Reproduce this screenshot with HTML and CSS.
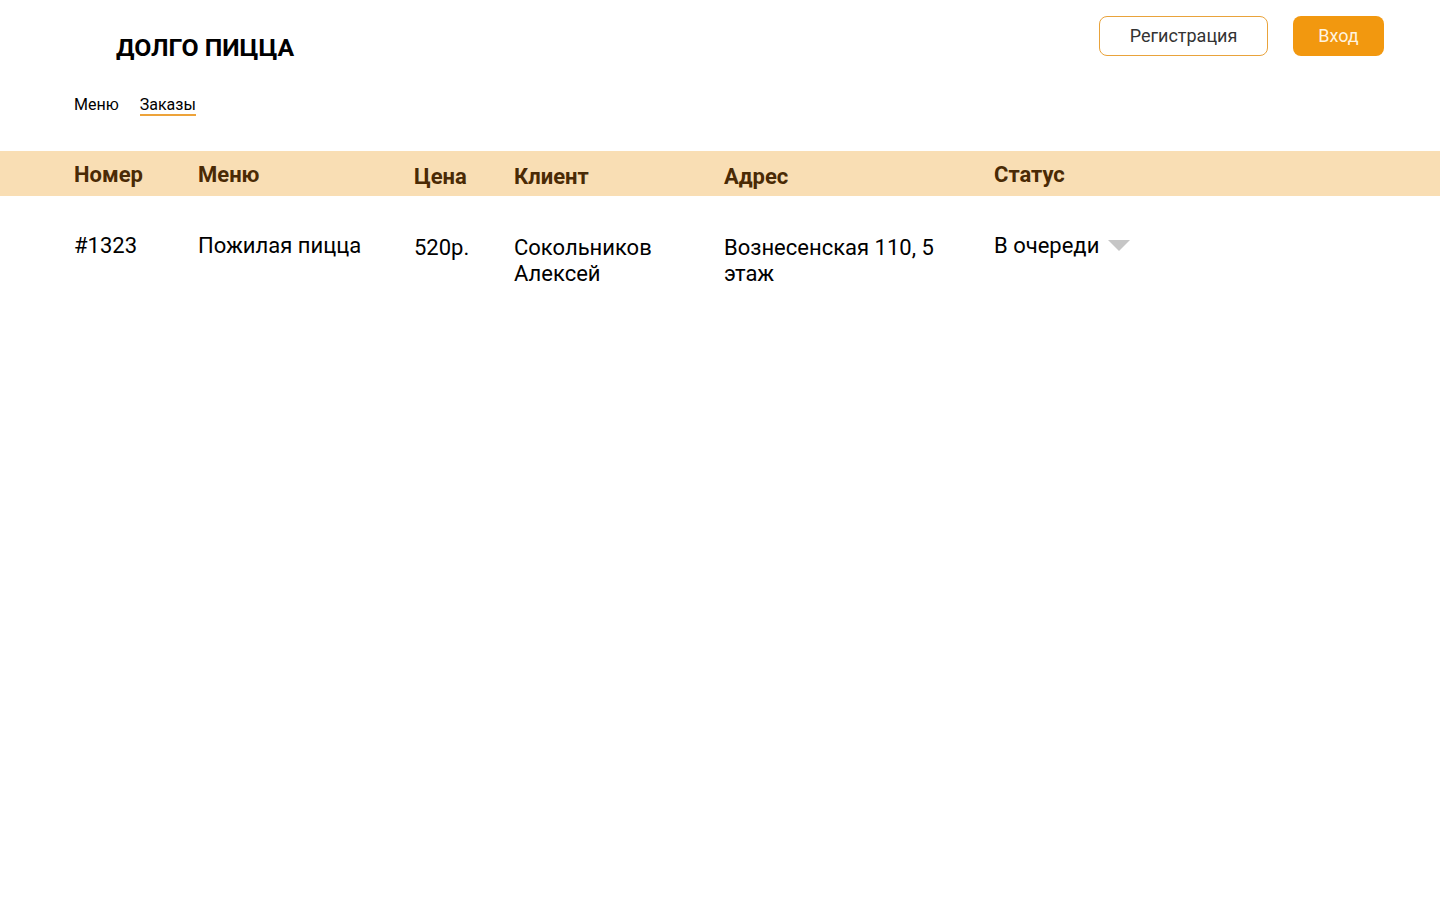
FILE: index.html
```html
<!DOCTYPE html>
<html lang="ru">
<head>
<meta charset="utf-8">
<title>Долго пицца — Заказы</title>
<link rel="stylesheet" href="styles.css">
</head>
<body>
<header class="topbar">
  <div class="brand">ДОЛГО ПИЦЦА</div>
  <div class="auth">
    <button class="btn btn-outline">Регистрация</button>
    <button class="btn btn-fill">Вход</button>
  </div>
</header>
<nav class="nav">
  <a class="nav-link" href="#">Меню</a>
  <a class="nav-link active" href="#">Заказы</a>
</nav>
<section class="orders">
  <div class="row head">
    <div class="cell c-num">Номер</div>
    <div class="cell c-menu">Меню</div>
    <div class="cell c-price low">Цена</div>
    <div class="cell c-client low">Клиент</div>
    <div class="cell c-addr low">Адрес</div>
    <div class="cell c-status">Статус</div>
  </div>
  <div class="row body">
    <div class="cell c-num">#1323</div>
    <div class="cell c-menu">Пожилая пицца</div>
    <div class="cell c-price low">520р.</div>
    <div class="cell c-client low">Сокольников<br>Алексей</div>
    <div class="cell c-addr low">Вознесенская 110, 5<br>этаж</div>
    <div class="cell c-status">
      <div class="select">В очереди <span class="caret"></span></div>
    </div>
  </div>
</section>
</body>
</html>
```
FILE: styles.css
```css
* { box-sizing: border-box; }
html, body { margin: 0; background: #fff; }
body {
  font-family: Roboto, "Noto Sans", "DejaVu Sans", sans-serif;
  color: #000;
}
.topbar {
  display: flex;
  justify-content: space-between;
  align-items: flex-start;
  padding: 16px 56px 0 116px;
  height: 84px;
}
.brand {
  margin-top: 17px;
  font-size: 24.8px;
  font-weight: 700;
  line-height: 29px;
}
.auth {
  display: flex;
  gap: 25px;
}
.btn {
  height: 40px;
  border-radius: 8px;
  font-family: inherit;
  font-size: 18px;
  padding: 0 0 2px;
  cursor: pointer;
}
.btn-outline {
  width: 169px;
  background: #fff;
  border: 1px solid #E9A33B;
  color: #333;
}
.btn-fill {
  width: 91px;
  background: #F2980F;
  border: none;
  color: #FFF3DF;
}
.nav {
  display: flex;
  gap: 21px;
  padding-left: 74px;
  height: 67px;
}
.nav-link {
  font-size: 16px;
  line-height: 18px;
  color: #000;
  text-decoration: none;
  height: 32px;
  padding-top: 12px;
}
.nav-link.active {
  border-bottom: 2px solid #EDA33A;
}
.row {
  display: flex;
  padding-left: 74px;
}
.row.head {
  background: #F9DEB4;
  height: 45px;
  padding-top: 11px;
  color: #4A2A05;
  font-weight: 700;
  font-size: 22px;
  line-height: 26px;
}
.row.body {
  padding-top: 37px;
  font-size: 22px;
  line-height: 26px;
}
.cell.low { padding-top: 2px; }
.c-num { width: 124px; }
.c-menu { width: 216px; }
.c-price { width: 100px; }
.c-client { width: 210px; }
.c-addr { width: 270px; }
.c-status { width: 300px; }
.select {
  display: flex;
  align-items: center;
  gap: 9px;
}
.caret {
  width: 0;
  height: 0;
  border-left: 11px solid transparent;
  border-right: 11px solid transparent;
  border-top: 11px solid #C6C6C6;
  margin-top: -1px;
}
```
